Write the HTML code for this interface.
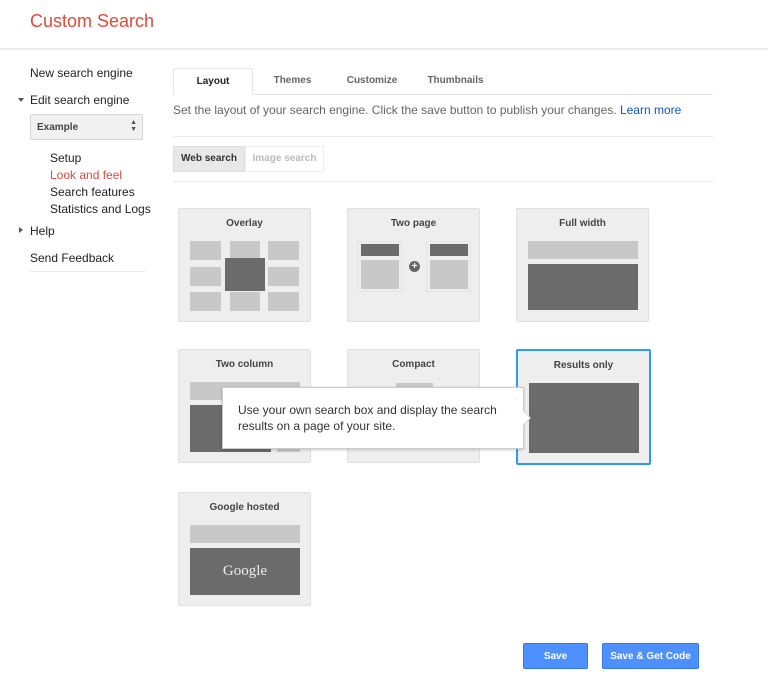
<!DOCTYPE html>
<html><head><style>
*{margin:0;padding:0;box-sizing:border-box}
body{width:768px;height:695px;background:#fff;font-family:"Liberation Sans",Arial,sans-serif;position:relative;overflow:hidden;color:#222}
.a{position:absolute}
.t{font-size:12px;color:#222}
.card{position:absolute;width:133px;height:114px;background:#eee;border:1px solid #e0e0e0;border-radius:2px}
.card .h{position:absolute;top:9px;left:0;right:0;text-align:center;font-size:10px;font-weight:bold;color:#444}
.l{position:absolute;background:#c8c8c8}
.d{position:absolute;background:#6b6b6b}
.tab{position:absolute;top:68px;height:27px;font-size:10px;font-weight:bold;color:#666;text-align:center;line-height:26px}
.btn{position:absolute;top:643px;height:26px;background:#4d90fe;border:1px solid #3079ed;border-radius:2px;color:#fff;font-size:10px;font-weight:bold;text-align:center;line-height:25px}
</style></head><body>
<div class="a" style="left:30px;top:11px;font-size:18px;color:#dd4b39">Custom Search</div>
<div class="a" style="left:0;top:48px;width:768px;height:2px;background:#ebebeb"></div>

<div class="a t" style="left:30px;top:66px">New search engine</div>
<div class="a" style="left:18px;top:98px;width:0;height:0;border-left:3px solid transparent;border-right:3px solid transparent;border-top:4px solid #555"></div>
<div class="a t" style="left:30px;top:93px">Edit search engine</div>
<div class="a" style="left:30px;top:114px;width:113px;height:26px;background:#f1f1f1;border:1px solid #d6d6d6;border-radius:2px;font-size:10px;font-weight:bold;color:#444;padding:7px 0 0 6px">Example<span style="position:absolute;right:5px;top:4px;font-size:7px;line-height:7px;color:#555">▲<br>▼</span></div>
<div class="a t" style="left:50px;top:151px">Setup</div>
<div class="a t" style="left:50px;top:168px;color:#dd4b39">Look and feel</div>
<div class="a t" style="left:50px;top:185px">Search features</div>
<div class="a t" style="left:50px;top:202px">Statistics and Logs</div>
<div class="a" style="left:19px;top:227px;width:0;height:0;border-top:3px solid transparent;border-bottom:3px solid transparent;border-left:4px solid #555"></div>
<div class="a t" style="left:30px;top:224px">Help</div>
<div class="a t" style="left:30px;top:251px">Send Feedback</div>
<div class="a" style="left:30px;top:271px;width:115px;height:1px;background:#ebebeb"></div>

<div class="a" style="left:173px;top:94px;width:540px;height:1px;background:#e5e5e5"></div>
<div class="tab" style="left:173px;width:80px;background:#fff;border:1px solid #e5e5e5;border-bottom-color:#fff;color:#222;border-radius:2px 2px 0 0">Layout</div>
<div class="tab" style="left:260px;width:65px">Themes</div>
<div class="tab" style="left:337px;width:70px">Customize</div>
<div class="tab" style="left:418px;width:75px">Thumbnails</div>
<div class="a" style="left:173px;top:103px;font-size:12px;color:#666">Set the layout of your search engine. Click the save button to publish your changes. <span style="color:#1155cc">Learn more</span></div>
<div class="a" style="left:173px;top:136px;width:540px;height:1px;background:#ebebeb"></div>
<div class="a" style="left:173px;top:146px;width:72px;height:26px;background:#e8e8e8;border:1px solid #ddd;font-size:10px;font-weight:bold;color:#333;text-align:center;line-height:24px">Web search</div>
<div class="a" style="left:245px;top:146px;width:79px;height:26px;background:#fff;border:1px solid #eee;font-size:10px;font-weight:bold;color:#bbb;text-align:center;line-height:24px">Image search</div>
<div class="a" style="left:173px;top:181px;width:540px;height:1px;background:#ebebeb"></div>

<div class="card" style="left:178px;top:208px"><div class="h">Overlay</div>
<div class="l" style="left:11px;top:32px;width:31px;height:19px"></div><div class="l" style="left:51px;top:32px;width:30px;height:19px"></div><div class="l" style="left:89px;top:32px;width:31px;height:19px"></div>
<div class="l" style="left:11px;top:58px;width:31px;height:19px"></div><div class="l" style="left:89px;top:58px;width:31px;height:19px"></div>
<div class="l" style="left:11px;top:83px;width:31px;height:19px"></div><div class="l" style="left:51px;top:83px;width:30px;height:19px"></div><div class="l" style="left:89px;top:83px;width:31px;height:19px"></div>
<div class="d" style="left:46px;top:49px;width:40px;height:33px"></div></div>

<div class="card" style="left:347px;top:208px"><div class="h">Two page</div>
<div class="a" style="left:9px;top:32px;width:45px;height:51px;border:1px solid #e4e4e4"></div>
<div class="d" style="left:13px;top:35px;width:38px;height:12px"></div><div class="l" style="left:13px;top:51px;width:38px;height:29px"></div>
<div class="a" style="left:61px;top:52px;width:11px;height:11px;border-radius:50%;background:#666;color:#fff;font-size:10px;line-height:11px;text-align:center;font-weight:bold">+</div>
<div class="a" style="left:78px;top:32px;width:45px;height:51px;border:1px solid #e4e4e4"></div>
<div class="d" style="left:82px;top:35px;width:38px;height:12px"></div><div class="l" style="left:82px;top:51px;width:38px;height:29px"></div></div>

<div class="card" style="left:516px;top:208px"><div class="h">Full width</div>
<div class="l" style="left:11px;top:32px;width:110px;height:18px"></div><div class="d" style="left:11px;top:55px;width:110px;height:46px"></div></div>

<div class="card" style="left:178px;top:349px"><div class="h">Two column</div>
<div class="l" style="left:11px;top:32px;width:110px;height:18px"></div><div class="d" style="left:11px;top:55px;width:81px;height:47px"></div><div class="l" style="left:98px;top:55px;width:23px;height:47px"></div></div>

<div class="card" style="left:347px;top:349px"><div class="h">Compact</div>
<div class="l" style="left:48px;top:33px;width:37px;height:10px"></div></div>

<div class="card" style="left:516px;top:349px;width:135px;height:116px;border:2px solid #2d9cf4"><div class="h" style="top:9px">Results only</div>
<div class="d" style="left:11px;top:32px;width:110px;height:70px"></div></div>

<div class="card" style="left:178px;top:492px"><div class="h">Google hosted</div>
<div class="l" style="left:11px;top:32px;width:110px;height:18px"></div><div class="d" style="left:11px;top:55px;width:110px;height:47px;color:#eee;font-family:'Liberation Serif',serif;font-size:15px;text-align:center;line-height:47px">Google</div></div>

<div class="a" style="left:222px;top:387px;width:302px;height:62px;background:#fff;border:1px solid #ccc;box-shadow:0 1px 3px rgba(0,0,0,.2);font-size:12px;color:#333;padding:14px 0 0 15px;line-height:16px">Use your own search box and display the search<br>results on a page of your site.</div>
<div class="a" style="left:523px;top:410px;width:0;height:0;border-top:8px solid transparent;border-bottom:8px solid transparent;border-left:8px solid #ccc"></div>
<div class="a" style="left:523px;top:411px;width:0;height:0;border-top:7px solid transparent;border-bottom:7px solid transparent;border-left:7px solid #fff"></div>

<div class="btn" style="left:523px;width:65px">Save</div>
<div class="btn" style="left:602px;width:97px">Save &amp; Get Code</div>
</body></html>
